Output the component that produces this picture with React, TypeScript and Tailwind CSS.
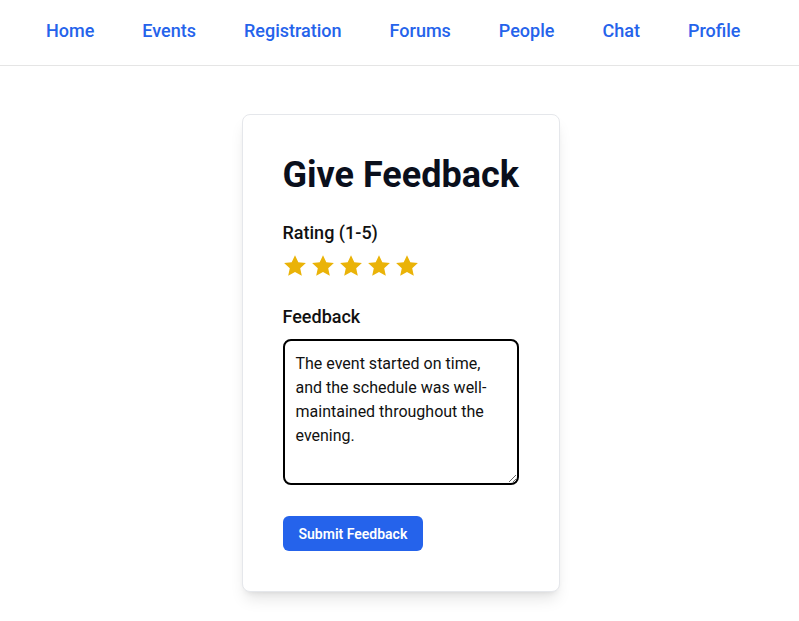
import * as React from "react";

const links = ["Home", "Events", "Registration", "Forums", "People", "Chat", "Profile"];

function StarIcon() {
  return (
    <svg viewBox="0 0 24 24" className="h-6 w-6 fill-[#eab308]">
      <path d="M12 1.2l3.3 7 7.6.8-5.7 5.2 1.6 7.6L12 17.9l-6.8 3.9 1.6-7.6L1.1 9l7.6-.8z" strokeLinejoin="round" />
    </svg>
  );
}

export default function App() {
  const [rating] = React.useState(5);
  const [feedback, setFeedback] = React.useState(
    "The event started on time, and the schedule was well-maintained throughout the evening.",
  );

  return (
    <div className="min-h-screen bg-white font-['Roboto',sans-serif]">
      <nav className="flex h-[66px] items-center gap-12 border-b border-[#e5e5e5] pb-[4px] pl-[46px]">
        {links.map((l) => (
          <a key={l} href="#" className="text-lg font-medium text-[#2563eb]">
            {l}
          </a>
        ))}
      </nav>

      <div className="flex justify-center pt-12">
        <div className="ml-[2px] w-[318px] rounded-lg border border-[#e5e7eb] bg-white px-10 pt-10 pb-10 shadow-lg">
          <h1 className="whitespace-nowrap text-4xl font-bold leading-10 text-[#0a0f1c]">Give Feedback</h1>

          <p className="mt-6 text-lg font-medium leading-7 text-[#111]">Rating (1-5)</p>
          <div className="mt-[7px] flex gap-1">
            {Array.from({ length: 5 }).map((_, i) => (
              <span key={i} className={i < rating ? "" : "opacity-30"}>
                <StarIcon />
              </span>
            ))}
          </div>

          <p className="mt-[25px] text-lg font-medium leading-7 text-[#111]">Feedback</p>
          <textarea
            value={feedback}
            onChange={(e) => setFeedback(e.target.value)}
            className="mt-2 block h-[146px] w-[236px] resize-y rounded-lg border-2 border-black px-[11px] pt-[11px] pb-[9px] text-base leading-6 text-[#111] outline-none"
          />

          <button
            type="button"
            className="mt-[31px] h-[35px] rounded-md bg-[#2563eb] px-4 text-sm font-semibold text-white"
          >
            Submit Feedback
          </button>
        </div>
      </div>
    </div>
  );
}
